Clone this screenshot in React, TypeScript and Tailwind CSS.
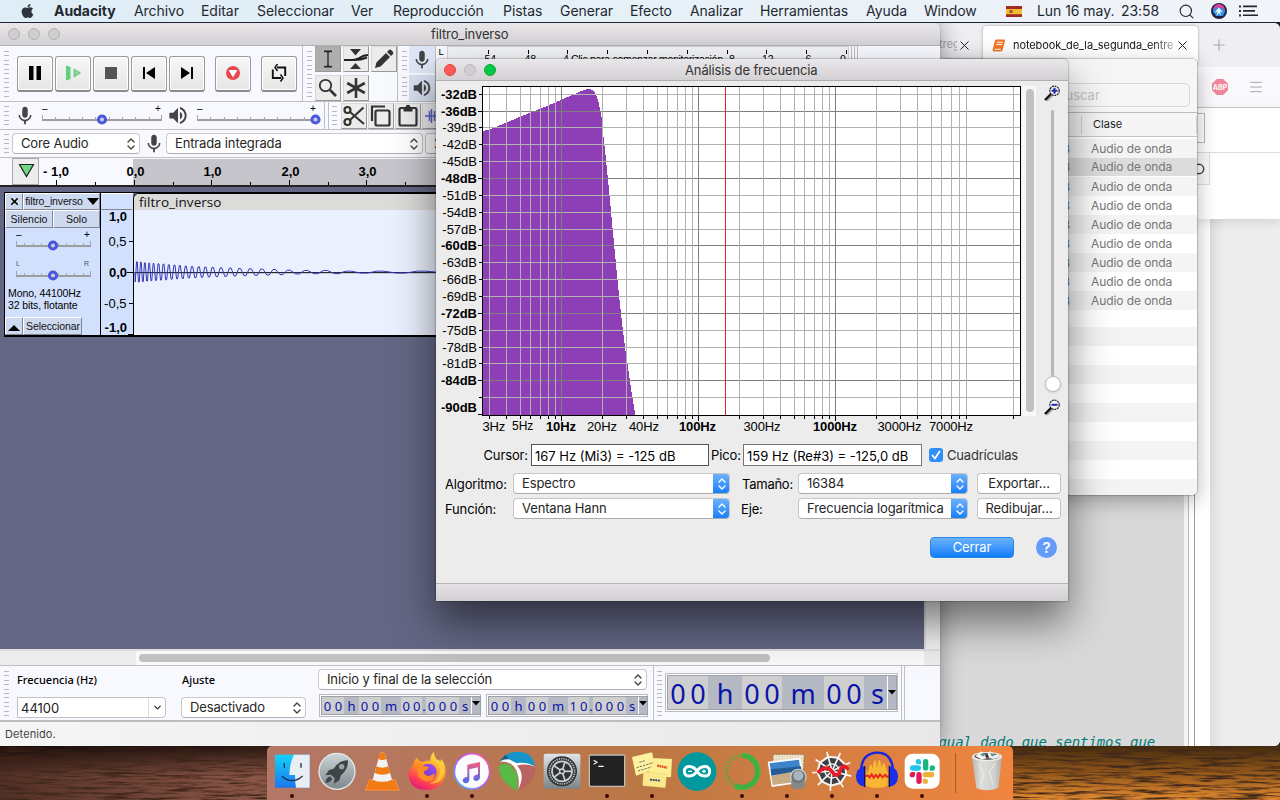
import React from "react";
import { FaApple } from "react-icons/fa";
import { MdMic, MdVolumeUp } from "react-icons/md";
import { ChevronDown, Menu, Plus, Search, X } from "lucide-react";

/* ---------- small shared pieces ---------- */

function Gripper({ n = 11 }: { n?: number }) {
  return (
    <div className="flex h-full w-[5px] shrink-0 flex-col justify-between">
      {Array.from({ length: n }, (_, i) => (
        <div key={i} className="h-px w-full bg-[#b9b9bf]" />
      ))}
    </div>
  );
}

function UpDown({ className = "" }: { className?: string }) {
  return (
    <svg viewBox="0 0 10 14" className={"h-[14px] w-[10px] " + className} fill="none" stroke="currentColor" strokeWidth="1.4" strokeLinecap="round" strokeLinejoin="round">
      <path d="M2 5 5 2l3 3M2 9l3 3 3-3" />
    </svg>
  );
}

function PlainSelect({ label, className }: { label: string; className: string }) {
  return (
    <div className={"flex h-[21px] shrink-0 items-center justify-between rounded-[4px] border border-[#c9c9cc] border-b-[#b0b0b3] bg-white pl-2 pr-[3px] text-[13px] tracking-[-0.13px] text-[#262626] " + className}>
      <span className="whitespace-nowrap">{label}</span>
      <UpDown className="text-[#444]" />
    </div>
  );
}

function BlueSelect({ label, className }: { label: string; className: string }) {
  return (
    <div className={"flex h-[21px] shrink-0 items-center justify-between overflow-hidden rounded-[4px] border border-[#c6c6c6] border-b-[#ababab] bg-white pl-2 text-[13px] tracking-[-0.13px] text-[#262626] " + className}>
      <span className="whitespace-nowrap">{label}</span>
      <div className="-mr-px flex h-[21px] w-[17px] items-center justify-center bg-gradient-to-b from-[#6cb3fa] to-[#0a7cf8] text-white">
        <UpDown />
      </div>
    </div>
  );
}

function Slider({ at, width, left = "–", right = "+" }: { at: number; width: number; left?: string; right?: string }) {
  const step = width / 9;
  const small = left === "L";
  return (
    <svg width={width + 12} height="24" className="shrink-0" fontFamily="Liberation Sans, sans-serif">
      <text x="5" y={small ? 7 : 9} fontSize={small ? 7 : 10} fill={small ? "#555" : "#000"}>{left}</text>
      <text x={width - 2} y={small ? 7 : 9} fontSize={small ? 7 : 10} fill={small ? "#555" : "#000"}>{right}</text>
      <rect x="5" y="16" width={width} height="2" fill="#9c9ca0" />
      {Array.from({ length: 10 }, (_, i) => {
        const edge = i === 0 || i === 9;
        return <rect key={i} x={Math.round(5 + i * step) - (i === 9 ? 1 : 0)} y={edge ? 12 : 14} width="1" height={edge ? 5 : 3} fill="#a5a5aa" />;
      })}
      <circle cx={at} cy="16.5" r="3.6" fill="#c8cbe4" stroke="#4a57dc" strokeWidth="3" />
    </svg>
  );
}

/* ---------- menu bar ---------- */

function MenuBar() {
  return (
    <div className="absolute left-0 top-0 flex h-[23px] w-[1280px] items-center border-b border-[#1d2630] bg-gradient-to-r from-[#dfedf7] via-[#e6f0f7] to-[#f1f4f9] text-[14px] tracking-[-0.05px] text-[#1f2830]">
      <FaApple className="ml-[20px] h-4 w-[15px] shrink-0 text-[#2c343c]" />
      <span className="ml-[19px] w-[80px] shrink-0 font-bold">Audacity</span>
      <span className="w-[67px] shrink-0">Archivo</span>
      <span className="w-[56px] shrink-0">Editar</span>
      <span className="w-[94px] shrink-0">Seleccionar</span>
      <span className="w-[42px] shrink-0">Ver</span>
      <span className="w-[110px] shrink-0 tracking-[-0.1px]">Reproducción</span>
      <span className="w-[57px] shrink-0">Pistas</span>
      <span className="w-[70px] shrink-0">Generar</span>
      <span className="w-[60px] shrink-0">Efecto</span>
      <span className="w-[70px] shrink-0">Analizar</span>
      <span className="w-[106px] shrink-0 tracking-[-0.1px]">Herramientas</span>
      <span className="w-[58px] shrink-0">Ayuda</span>
      <span className="w-[82px] shrink-0 tracking-[-0.2px]">Window</span>
      <svg className="h-[11px] w-4 shrink-0" viewBox="0 0 16 11">
        <rect width="16" height="11" fill="#a32a22" />
        <rect y="3" width="16" height="5.2" fill="#f2bd32" />
        <rect x="3.4" y="4" width="3.2" height="3" fill="#a8543a" />
      </svg>
      <span className="ml-[15px] w-[84px] shrink-0 whitespace-nowrap">Lun 16 may.</span>
      <span className="w-[57px] shrink-0">23:58</span>
      <Search className="h-[17px] w-[17px] shrink-0" strokeWidth={1.6} />
      <svg className="ml-[16px] h-4 w-4 shrink-0" viewBox="0 0 16 16">
        <circle cx="8" cy="8" r="8" fill="#1b2348" />
        <path d="M2 7a6 6 0 0 1 12 0L8 9z" fill="#d8409c" />
        <path d="M1.6 8c2-4 8-5 12.800 0L12 13H5z" fill="#2e8fe0" />
        <path d="m8 4.500 4 5-3-1 1 4.500-2-3-2.500 3 1-4.500-3 1z" fill="#e8fbff" />
      </svg>
      <svg className="ml-[12px] h-3 w-[19px] shrink-0" viewBox="0 0 19 12" fill="#1f2830">
        <path d="M0 .6h2v2H0zM4 .6h14v1.700H4zM0 5h2v2H0zM4 5h12v1.700H4zM0 9.400h2v2H0zM4 9.400h15v1.700H4z" />
      </svg>
    </div>
  );
}

/* ---------- browser window ---------- */

function Browser() {
  return (
    <div className="absolute left-[900px] top-[23px] isolate h-[723px] w-[380px] overflow-hidden rounded-b-md rounded-t-md bg-[#ededed]">
      <div className="flex h-[44px] items-center bg-[#efeff3]">
        <span className="ml-[39px] w-[18px] overflow-hidden whitespace-nowrap text-[11.5px] tracking-[-0.2px] text-[#aaa]">treg</span>
        <X className="h-[15px] w-[15px] shrink-0 text-[#222]" strokeWidth={1.6} />
        <div className="ml-[11px] flex h-[38px] w-[215px] shrink-0 items-center rounded-[4px] bg-white shadow-[0_0_3px_rgba(0,0,0,0.35)]">
          <svg className="ml-[9px] h-[13px] w-[14px] shrink-0" viewBox="0 0 14 13">
            <path d="M4.200.5H12q1.400 0 1 1.400L10.600 11q-.3 1.500-1.800 1.500H2Q.2 12.500.6 10.800L3 1.500Q3.200.5 4.200.5z" fill="#f37726" />
            <path d="M5 3.300h5.800M4.400 5.600h5.800M2.500 10.300h6.400" stroke="#fff" strokeWidth="1" />
          </svg>
          <span className="ml-[7px] w-[162px] whitespace-nowrap bg-gradient-to-r from-[#15141a] from-85% to-[#bbb] bg-clip-text text-[11px] tracking-[-0.1px] text-transparent">notebook_de_la_segunda_entre</span>
          <X className="h-[15px] w-[15px] shrink-0 text-[#222]" strokeWidth={1.6} />
        </div>
        <Plus className="ml-[12px] h-[18px] w-[18px] shrink-0 text-[#aaa]" strokeWidth={1.500} />
      </div>
      <div className="flex h-[41px] items-center border-b border-[#ccc] bg-[#f9f9fb] pl-[312px]">
        <div className="flex h-4 w-4 items-center justify-center bg-[#f0859a] text-[7px] font-bold text-white [clip-path:polygon(30%_0,70%_0,100%_30%,100%_70%,70%_100%,30%_100%,0_70%,0_30%)]">ABP</div>
        <Menu className="ml-[20px] h-4 w-4 text-[#a6a6aa]" strokeWidth={1.500} />
      </div>
      <div className="relative z-10 flex h-[111px] flex-col bg-white shadow-[0_3px_10px_rgba(0,0,0,0.12)]">
        <div className="mt-[5px] h-[30px] w-[305px] border border-[#b8b8b8]" />
        <div className="mt-[9px] border-t border-[#ddd]" />
        <div className="flex h-[32px] w-[310px] items-center justify-end border border-t-0 border-[#ddd] bg-[#fafafa] pr-[4px]">
          <svg width="12" height="12"><circle cx="6" cy="6" r="4.700" fill="none" stroke="#444" strokeWidth="1.500" /></svg>
        </div>
      </div>
      <div className="flex h-[527px]">
        <div className="flex w-[284px] flex-col justify-end bg-[#d9d9d9]">
          <div className="h-[11px] whitespace-pre pl-[38.500px] font-['DejaVu_Sans_Mono',monospace] text-[14px] italic leading-[14px] tracking-[-0.1px] text-[#007b78]">gual dado que sentimos que</div>
        </div>
        <div className="w-[5px] border-r border-[#bbb] bg-[#f4f4f4]" />
        <div className="w-[6px] border-r border-[#999] bg-white" />
        <div className="w-[15px] bg-white" />
        <div className="flex-1 bg-[#ededed] bg-gradient-to-r from-[#dedede] to-[#ededed] to-20%" />
      </div>
    </div>
  );
}

/* ---------- Finder window ---------- */

function Finder() {
  const rows = Array.from({ length: 9 }, (_, i) => i);
  return (
    <div className="absolute left-[940px] top-[59px] flex h-[436px] w-[257px] flex-col overflow-hidden rounded-[5px] bg-white shadow-[0_6px_20px_rgba(0,0,0,0.3),0_0_1px_1px_rgba(0,0,0,0.18)]">
      <div className="flex h-[54px] shrink-0 justify-end border-b border-[#bbb] bg-[#f6f6f6] pr-[7px] pt-[24px]">
        <div className="flex h-[24px] w-[160px] items-center rounded-[5px] border border-[#d9d9d9] pl-[26px] text-[13px] text-[#c3c3c3]">Buscar</div>
      </div>
      <div className="flex h-[24px] shrink-0 items-center border-b border-[#c6c6c6] bg-[#f5f5f5] text-[11px] text-[#222]">
        <div className="ml-[141px] h-[18px] border-l border-[#d0d0d0]" />
        <span className="ml-[11px]">Clase</span>
        <div className="ml-auto h-[18px] border-l border-[#d0d0d0]" />
      </div>
      <div className="mt-[2px] flex flex-col text-[12px] text-[#777]">
        {rows.map((i) => (
          <div
            key={i}
            className={
              "flex h-[19px] items-center " + (i === 1 ? "border-b border-white bg-[#dcdcdc]" : i % 2 === 0 ? "bg-[#f4f4f4]" : "bg-white")
            }
          >
            <span className="ml-[122px] w-[29px] text-[#60789a]">B</span>
            <span className="whitespace-nowrap tracking-[-0.08px]">Audio de onda</span>
          </div>
        ))}
        <div className="h-[17px]" />
        {rows.map((i) => (
          <div key={i} className={"h-[19px] " + (i % 2 === 0 ? "bg-[#f4f4f4]" : "bg-white")} />
        ))}
      </div>
    </div>
  );
}

/* ---------- Audacity toolbars ---------- */

function TransportButton({ children, className = "" }: { children: React.ReactNode; className?: string }) {
  return (
    <div className={"flex h-[36px] w-[36px] shrink-0 items-center justify-center rounded-[3px] border border-[#9b9b9b] border-b-2 border-b-[#8b8b8b] bg-gradient-to-b from-[#f7f7f7] to-[#e6e6e6] shadow-[inset_0_0_0_1px_#fff] " + className}>
      {children}
    </div>
  );
}

function ToolCell({ children, on = false }: { children?: React.ReactNode; on?: boolean }) {
  return (
    <div className={"flex h-[26px] w-[26px] shrink-0 items-center justify-center border border-r-[#999] border-b-[#999] " + (on ? "border-[#aaa] bg-[#aeaeae]" : "border-[#d8d8d8] bg-[#ececec]")}>
      {children}
    </div>
  );
}

function Toolbars() {
  return (
    <div className="flex flex-col bg-[#f8f9ff]">
      <div className="flex h-[56px] border-b border-[#c0c0c4]">
        <div className="flex w-[303px] shrink-0 items-center border-r border-[#c0c0c4] pl-1">
          <div className="h-[46px]"><Gripper /></div>
          <TransportButton className="ml-2">
            <svg width="14" height="14"><path d="M1 0h4.500v14H1zM8.500 0H13v14H8.500z" /></svg>
          </TransportButton>
          <TransportButton className="ml-[2px]">
            <svg width="18" height="16"><path d="M2 .5 6.500 2v12L2 15.500z" fill="#5fd07c" /><path d="m10 4 6.500 4L10 12z" fill="#8bd59a" stroke="#5fb878" strokeWidth=".8" /></svg>
          </TransportButton>
          <TransportButton className="ml-[2px]"><div className="h-[12px] w-[12px] bg-[#555]" /></TransportButton>
          <TransportButton className="ml-[2px]">
            <svg width="14" height="14"><path d="M1 1h2v12H1zM13 1v12L4 7z" /></svg>
          </TransportButton>
          <TransportButton className="ml-[2px]">
            <svg width="14" height="14"><path d="M11 1h2v12h-2zM1 1v12l9-6z" /></svg>
          </TransportButton>
          <TransportButton className="ml-[10px]">
            <svg width="16" height="16"><circle cx="8" cy="8" r="7" fill="#e8474d" /><path d="M3.600 5h8.800L8 12.500z" fill="#fff" /></svg>
          </TransportButton>
          <TransportButton className="ml-[10px]">
            <svg width="18" height="18" fill="none" stroke="#111" strokeWidth="1.900"><path d="M2.800 5.500V14H11M15.200 12V3.500H7" /><path d="M10.500 10.500 13 14l-2.500 3.500M7.500 0 5 3.500 7.500 7" strokeWidth="1.500" /></svg>
          </TransportButton>
        </div>
        <div className="flex w-[95px] shrink-0 border-r border-[#c0c0c4] pl-1">
          <div className="my-[5px] h-[46px]"><Gripper /></div>
          <div className="ml-[3px] grid w-[82px] grid-cols-3 gap-x-[2px] gap-y-[2px]">
            <ToolCell on><svg width="10" height="18" fill="none" stroke="#222" strokeWidth="1.300"><path d="M1 1.500q4-.5 4 2v11q0 2.500-4 2M9 1.500q-4-.5-4 2v11q0 2.500 4 2M1 1.200h8M1 16.800h8" /></svg></ToolCell>
            <ToolCell><svg width="24" height="22" className="shrink-0"><path d="M6 1h11l-5.500 6.500zM6 21h11l-5.500-6z" fill="#333" /><path d="M0 12h8q6-.5 9-3 2-1.500 7-2M0 12h8q8 .5 15-2.500" fill="none" stroke="#222" strokeWidth="2" /></svg></ToolCell>
            <ToolCell><svg width="20" height="20" fill="#333"><path d="m1 19 1.400-5.500L12 4l4 4-9.500 9.600zM13 3l2-2q1.200-1 2.500.3L18.700 2.500q1.200 1.300.3 2.500l-2 2z" /></svg></ToolCell>
            <ToolCell><svg width="20" height="20" fill="none" stroke="#333"><circle cx="7.500" cy="7.500" r="5.700" strokeWidth="1.800" /><path d="m12 12 6 6" strokeWidth="2.600" /></svg></ToolCell>
            <ToolCell><svg width="20" height="20" stroke="#333" strokeWidth="2.600"><path d="M10 0v20M1.200 5l17.600 10M1.200 15 18.800 5" /></svg></ToolCell>
          </div>
        </div>
        <div className="flex w-[38px] shrink-0 border-r border-[#c0c0c4] pl-1">
          <div className="flex flex-col justify-between py-[5px]">
            <div className="h-[19px]"><Gripper n={5} /></div>
            <div className="h-[19px]"><Gripper n={5} /></div>
          </div>
          <div className="ml-[2px] flex w-[27px] flex-col gap-[2px] text-[#444]">
            <div className="flex h-[27px] items-center justify-center bg-[#dfe7f6]"><MdMic className="h-[22px] w-[22px]" /></div>
            <div className="flex h-[26px] items-center justify-center bg-[#d8e0f0]"><MdVolumeUp className="h-[22px] w-[22px]" /></div>
          </div>
        </div>
        <svg width="504" height="55" viewBox="436 46 504 55" fontFamily="Liberation Sans, sans-serif" fontSize="10.500">
          <text x="438.500" y="55" fontSize="9.500">L</text>
          <rect x="447.500" y="46.500" width="401" height="55" fill="#f1f2f5" stroke="#d2d2d6" />
          {[488, 528, 567, 607, 647, 687, 727, 766, 806, 846].map((x) => (
            <rect key={x} x={x} y="50" width="1" height="4" />
          ))}
          <text x="481" y="62.500">-54</text><text x="521" y="62.500">-48</text><text x="559.500" y="62.500">-4</text>
          <text x="571" y="62.500" textLength="152">Clic para comenzar monitorización</text>
          <text x="729" y="62.500">8</text><text x="758.500" y="62.500">-12</text><text x="802" y="62.500">-6</text><text x="840" y="62.500">0</text>
          <path d="M851.500 46v55M854.500 46v55M857.500 46v55" stroke="#c0c0c4" />
        </svg>
      </div>
      <div className="flex h-[28px] border-b border-[#c0c0c4]">
        <div className="flex w-[325px] shrink-0 items-center border-r border-[#c0c0c4] pl-1">
          <div className="h-[19px]"><Gripper n={5} /></div>
          <MdMic className="ml-[5px] h-[22px] w-[22px] shrink-0 text-[#444]" />
          <div className="ml-px -mt-[2px]"><Slider at={65} width={120} /></div>
          <MdVolumeUp className="-ml-[3px] h-[23px] w-[24px] shrink-0 text-[#444]" />
          <div className="ml-[2px] -mt-[2px]"><Slider at={123.500} width={120} /></div>
        </div>
        <div className="ml-[3px] flex items-center border-l border-[#c0c0c4] pl-[3px]">
          <div className="h-[19px]"><Gripper n={5} /></div>
          <div className="ml-[4px] flex gap-[1px]">
            <ToolCell><svg width="22" height="22" fill="none" stroke="#333" strokeWidth="2.200"><circle cx="4.500" cy="5" r="3" /><circle cx="4.500" cy="17" r="3" /><path d="M7 7 21 19M7 15 20.500 2.500" /></svg></ToolCell>
            <ToolCell><svg width="22" height="23" fill="none" stroke="#333" strokeWidth="2.200"><path d="M2 17V2.500h13" /><rect x="5.500" y="6.500" width="14" height="15" rx="1.500" /></svg></ToolCell>
            <ToolCell><svg width="20" height="23" fill="none" stroke="#333" strokeWidth="2.200"><rect x="1.500" y="4" width="17" height="17.500" rx="1.500" /><path d="M5.500 3h9v4.500h-9z" fill="#333" stroke="none" /><circle cx="10" cy="3" r="2.300" fill="#333" stroke="none" /></svg></ToolCell>
            <ToolCell><svg width="24" height="18" stroke="#5864c8" className="shrink-0"><path d="M2 9h20M6.500 4v10M8.500 2v14M11.500 4v10" strokeWidth="1.500" /></svg></ToolCell>
          </div>
        </div>
      </div>
      <div className="flex h-[28px] items-center border-b border-[#c0c0c4] pl-1">
        <div className="h-[19px]"><Gripper n={5} /></div>
        <PlainSelect label="Core Audio" className="ml-[3px] w-[128px]" />
        <MdMic className="ml-[3px] h-[22px] w-[22px] shrink-0 text-[#444]" />
        <PlainSelect label="Entrada integrada" className="ml-[1px] w-[257px]" />
        <PlainSelect label="2" className="ml-[2px] w-[160px]" />
      </div>
      <div className="flex h-[29px] border-b-2 border-[#222]">
        <svg width="133" height="27" fontFamily="Liberation Sans, sans-serif" fontSize="13" fontWeight="bold" className="shrink-0">
          <rect x="12.500" y=".5" width="26" height="26" fill="#ededed" stroke="#a8a8a8" />
          <path d="M19.500 6.500h14l-7 12z" fill="#6fd684" stroke="#222" strokeWidth="1.200" />
          <text x="43" y="17.500">- 1,0</text>
          <path d="M56.500 22v5M95.500 24v3" stroke="#000" />
        </svg>
        <svg width="807" height="27" viewBox="133 158 807 27" fontFamily="Liberation Sans, sans-serif" fontSize="13" fontWeight="bold" textAnchor="middle" className="overflow-visible">
          <rect x="133" y="159" width="807" height="26" fill="#c5c5cb" />
          <text x="135.500" y="175.500">0,0</text><text x="212.500" y="175.500">1,0</text><text x="290.500" y="175.500">2,0</text><text x="367.500" y="175.500">3,0</text>
          <path d="M134.500 180v5M211.500 180v5M289.500 180v5M366.500 180v5M173.500 182v3M250.500 182v3M328.500 182v3M405.500 182v3" stroke="#000" />
        </svg>
      </div>
    </div>
  );
}

/* ---------- track ---------- */

const PEAKS: [number, number][] = [
  [409, 31], [421, 30], [433, 28], [446, 27], [459, 26], [474, 25], [489, 24], [505, 22], [522, 21], [538, 20], [556, 18], [575, 17],
  [595, 16], [615, 15], [637, 14], [662, 13], [690, 12], [718, 11], [750, 10], [785, 9], [822, 8], [866, 6], [918, 5], [976, 5],
  [1045, 3], [1140, 3], [1265, 3],
];

function wavePath() {
  let d = "M403 277 L404 306";
  PEAKS.forEach(([x, a], i) => {
    const next = PEAKS[i + 1];
    const prev = i ? PEAKS[i - 1][0] : 397;
    const half = (x - prev) / 4;
    d += ` L${x - half} 277 L${x - half * 0.4} ${277 - a} L${x + half * 0.4} ${277 - a}`;
    if (next) {
      const m = (x + next[0]) / 2;
      const q = (next[0] - x) / 4;
      const b = a * (a > 8 ? 0.95 : 0.9);
      d += ` L${x + q} 277 L${m - q * 0.4} ${277 + b} L${m + q * 0.4} ${277 + b}`;
    }
  });
  return d + " L1310 277";
}

const CHIP = "flex shrink-0 items-center justify-center whitespace-nowrap border-r border-b border-[#7f8798] border-t border-t-white border-l border-l-white bg-[#cdd9ef] text-[#111]";

function Track() {
  return (
    <div className="ml-[4px] mt-[5px] flex h-[145px] border-2 border-r-0 border-black font-['Liberation_Sans',sans-serif] [border-left-width:1px] [border-top-width:1px]">
      <div className="flex w-[96px] shrink-0 flex-col border-r border-black bg-[#d1e0fd] text-[10.5px]">
        <div className="flex h-[17px]">
          <div className={CHIP + " w-[18px]"}><X className="h-[11px] w-[11px] text-black" strokeWidth={3.500} /></div>
          <div className={CHIP + " w-[77px] gap-[4px] pl-px tracking-[-0.15px]"}>
            filtro_inverso
            <svg width="12" height="7" className="shrink-0"><path d="M0 0h12L6 7z" /></svg>
          </div>
        </div>
        <div className="flex h-[18px]">
          <div className={CHIP + " w-[48px]"}>Silencio</div>
          <div className={CHIP + " w-[47px]"}>Solo</div>
        </div>
        <div className="ml-[6px] mt-px h-[26px]"><Slider at={42} width={75} /></div>
        <div className="ml-[6px] mt-[4px] h-[26px]"><Slider at={42} width={75} left="L" right="R" /></div>
        <div className="mt-[2px] whitespace-nowrap pl-[3px] leading-[12px] tracking-[-0.1px] text-black">
          Mono, 44100Hz
          <br />
          32 bits, flotante
        </div>
        <div className="mt-auto flex h-[18px]">
          <div className={CHIP + " w-[18px]"}><svg width="12" height="6" className="mt-[3px]"><path d="M0 6h12L6 0z" /></svg></div>
          <div className={CHIP + " w-[59px] pl-px tracking-[-0.1px]"}>Seleccionar</div>
        </div>
      </div>
      <svg width="32" height="142" viewBox="101 193 32 142" className="shrink-0" fontSize="13" textAnchor="end">
        <rect x="101" y="193" width="32" height="142" fill="#d1e0fd" />
        <path d="M101 209.500h31" stroke="#888" />
        <path d="M101 193.500h32" stroke="#fff" />
        <text x="127" y="221" fontWeight="bold">1,0</text>
        <text x="126.500" y="246">0,5</text>
        <text x="127" y="277" fontWeight="bold">0,0</text>
        <text x="126.500" y="308">-0,5</text>
        <text x="127" y="332" fontWeight="bold">-1,0</text>
        <path d="M129 241.500h4M127 272.500h6M129 303.500h4M128 334.500h5" stroke="#000" />
      </svg>
      <div className="flex min-w-0 flex-1 flex-col overflow-hidden rounded-tl-[6px] border-l border-t border-black bg-[#eaf0fe]">
        <div className="h-[16px] shrink-0 bg-[#dbdbda] pl-[5px] font-['Open_Sans',sans-serif] text-[13.500px] leading-[16px] tracking-[0.05px] text-[#111]">filtro_inverso</div>
        <svg width="303" height="124" viewBox="402 90 908 373" className="shrink-0" fill="none">
          <path d="M402 278.500h908" stroke="#000" strokeWidth="3" />
          <path d={wavePath()} stroke="#3237b8" strokeWidth="3" strokeLinejoin="round" />
        </svg>
      </div>
    </div>
  );
}

/* ---------- selection bar ---------- */

type Seg = [string, string, boolean];

function TimeBox({ segs, big = false }: { segs: Seg[]; big?: boolean }) {
  return (
    <div className={"flex shrink-0 border border-[#bcbcc0] bg-white p-px font-['Noto_Sans',sans-serif] text-[#0a14a8] " + (big ? "h-[39px] text-[27px]" : "h-[23px] text-[13px]")}>
      <div className="flex flex-1 border border-[#9da0a8] bg-[#b4b9c3]">
        {segs.map(([t, w, digit], i) => (
          <div key={i} className={"flex shrink-0 items-center justify-around pt-px leading-none " + w + (digit ? " bg-[#cfcfcf]" : "")}>
            {t.split("").map((c, j) => (
              <span key={j}>{c}</span>
            ))}
          </div>
        ))}
        <div className="flex flex-1 items-center justify-center border-l border-white">
          <svg width="8" height="5" className={big ? "" : "-mt-[4px]"}><path d="M0 0h8L4 4.500z" fill="#000" /></svg>
        </div>
      </div>
    </div>
  );
}

const small = (a: string): Seg[] => [
  ["00", "w-[22px]", true], ["h", "w-[15px]", false], ["00", "w-[22px]", true], ["m", "w-[20px]", false],
  [a, "w-[21px]", true], [".", "w-[4px]", false], ["000", "w-[33px]", true], ["s", "w-[12px]", false],
];

function SelectionBar() {
  return (
    <div className="flex h-[57px] border-b-2 border-t border-b-[#bdbdbf] border-t-[#c0c0c4] bg-[#f8f9ff]">
      <div className="flex w-[654px] shrink-0 border-r border-[#c0c0c4] pl-1">
        <div className="my-[5px] h-[45px]"><Gripper /></div>
        <div className="ml-2 flex w-[164px] flex-col">
          <span className="mt-[6px] h-[16px] font-['Noto_Sans',sans-serif] text-[11px] font-medium leading-[16px] text-black">Frecuencia (Hz)</span>
          <div className="mt-[9px] flex h-[21px] w-[149px] items-center rounded-r-[4px] border border-[#c2c2c4] bg-white pl-[3px] text-[13px] text-[#222]">
            <span className="flex-1 pt-px">44100</span>
            <div className="flex h-full w-[17px] items-center justify-center border-l border-[#ddd]"><ChevronDown className="h-[11px] w-[11px]" strokeWidth={2.500} /></div>
          </div>
        </div>
        <div className="flex w-[137px] flex-col">
          <span className="mt-[6px] h-[16px] pl-px font-['Noto_Sans',sans-serif] text-[11px] font-medium leading-[16px] text-black">Ajuste</span>
          <PlainSelect label="Desactivado" className="mt-[9px] w-[125px]" />
        </div>
        <div className="flex flex-col">
          <PlainSelect label="Inicio y final de la selección" className="mt-[3px] w-[329px]" />
          <div className="mt-[4px] flex gap-[4px]">
            <div className="flex w-[163px] flex-col pl-px"><TimeBox segs={small("00")} /></div>
            <div className="flex w-[163px] flex-col pl-px"><TimeBox segs={small("10")} /></div>
          </div>
        </div>
      </div>
      <div className="flex w-[248px] shrink-0 border-r border-[#c0c0c4] pl-[3px]">
        <div className="my-[5px] h-[45px]"><Gripper /></div>
        <div className="ml-[3px] mt-[7px] flex w-[233px] flex-col">
          <TimeBox
            big
            segs={[
              ["00", "w-[40px]", true], ["h", "w-[34px]", false], ["00", "w-[40px]", true],
              ["m", "w-[42px]", false], ["00", "w-[40px]", true], ["s", "w-[23px] pl-[4px]", false],
            ]}
          />
        </div>
      </div>
      <div className="ml-[2px] flex-1 border-l border-[#c0c0c4]" />
    </div>
  );
}

function Audacity() {
  return (
    <div className="absolute left-0 top-[23px] flex h-[723px] w-[940px] flex-col overflow-hidden rounded-tr-[5px] bg-[#ececec] shadow-[0_0_22px_rgba(0,0,0,0.4),0_0_1px_rgba(0,0,0,0.6)]">
      <div className="flex h-[23px] shrink-0 items-center border-b border-[#b3b1b3] bg-gradient-to-b from-[#e9e7e9] to-[#d3d1d3] pl-[8px]">
        {[0, 1, 2].map((i) => (
          <div key={i} className="mr-[8px] h-3 w-3 rounded-full border border-[#b3b1b3] bg-[#cfcdcf]" />
        ))}
        <span className="ml-[363px] text-[13px] tracking-[-0.12px] text-[#333]">filtro_inverso</span>
      </div>
      <Toolbars />
      <div className="flex h-[462px] shrink-0">
        <div className="w-[924px] bg-[#636784]"><Track /></div>
        <div className="flex-1 border-l-2 border-[#dcdcdc] bg-[#f2f2f2]" />
      </div>
      <div className="flex h-[16px] shrink-0 border-t-2 border-[#dedede]">
        <div className="ml-[136px] flex w-[788px] items-center bg-[#f9f9f9] pl-[3px]">
          <div className="h-[8px] w-[631px] rounded-full bg-[#c1c1c1]" />
        </div>
      </div>
      <SelectionBar />
      <div className="flex flex-1 items-center bg-gradient-to-r from-[#f5f5f5] to-[#e8e8e8] pl-[5px] text-[11px] tracking-[0.1px] text-[#444]">Detenido.</div>
    </div>
  );
}

/* ---------- frequency dialog ---------- */

const H_LINES = [94, 111, 127, 144, 161, 178, 195, 212, 229, 245, 262, 279, 296, 313, 330, 347, 363, 380, 397];
const H_LABELS = [32, 36, 39, 42, 45, 48, 51, 54, 57, 60, 63, 66, 69, 72, 75, 78, 81, 84];
const MAJOR_H = [36, 48, 60, 72, 84];
const BOLD_H = [32, 36, 48, 60, 72, 84];

const V_FREQS = [
  3, 4, 5, 6, 7, 8, 9, 10, 20, 30, 40, 50, 60, 70, 80, 90, 100, 200, 300, 400, 500, 600, 700, 800, 900, 1000, 2000, 3000, 4000, 5000,
  6000, 7000, 8000, 9000, 20000,
];
const freqX = (f: number) => Math.floor(561.3 + 137 * (Math.log10(f) - 1));

const X_LABELS: [number, string, boolean][] = [
  [482.500, "3Hz", false], [546, "10Hz", true], [587, "20Hz", false], [629, "40Hz", false], [679, "100Hz", true],
  [743.500, "300Hz", false], [813, "1000Hz", true], [877.500, "3000Hz", false], [929, "7000Hz", false],
];

const SLOPE: [number, number][] = [
  [141, 213], [160, 208], [205, 190], [250, 171], [290, 155], [330, 139], [376, 119], [410, 104], [436, 93], [450, 88], [462, 87], [470, 91],
  [478, 101], [485, 118], [490, 140], [496, 172], [499, 200], [502, 230], [508, 285], [516, 365], [524, 450], [533, 545], [542, 640],
  [551, 730], [560, 810], [568, 872], [576, 925], [586, 995], [597, 1062],
];

function spectrumPath() {
  let d = "M483 415";
  for (let x = 483; x <= 634; x++) {
    const cx = (x - 436) * 3 + 1;
    let i = 0;
    while (i < SLOPE.length - 2 && SLOPE[i + 1][0] < cx) i++;
    const [x0, y0] = SLOPE[i];
    const [x1, y1] = SLOPE[i + 1];
    const y = Math.round(60 + (y0 + ((y1 - y0) * (cx - x0)) / (x1 - x0)) / 3);
    d += `V${Math.min(y, 415)}H${x + 1}`;
  }
  return d + "V415Z";
}

function Chart() {
  return (
    <svg width="586" height="356" viewBox="436 81 586 356" className="shrink-0" fontFamily="Liberation Sans, sans-serif" fontSize="13">
      <rect x="482" y="86" width="539" height="330" fill="#fff" />
      <path d={spectrumPath()} fill="#8f3fb5" shapeRendering="crispEdges" />
      {H_LINES.map((y, i) => (
        <g key={y}>
          <rect x="483" y={y} width="537" height="1" fill={MAJOR_H.includes(H_LABELS[i]) ? "#7f7f7f" : "#b2b2b2"} />
          <rect x={MAJOR_H.includes(H_LABELS[i]) ? 478 : 479} y={y} width="4" height="1" />
        </g>
      ))}
      {V_FREQS.map((f) => {
        const major = f === 10 || f === 100 || f === 1000;
        return (
          <g key={f}>
            <rect x={freqX(f)} y="87" width="1" height="328" fill={major ? "#7f7f7f" : "#b2b2b2"} />
            <rect x={freqX(f)} y="416" width="1" height={major ? 5 : 3} />
          </g>
        );
      })}
      <rect x="725" y="87" width="1" height="328" fill="#e0202c" />
      <rect x="482.500" y="86.500" width="538" height="329" fill="none" stroke="#000" />
      <rect x="478" y="414" width="4" height="1" />
      {H_LABELS.map((v, i) => (
        <text key={v} x="477" y={H_LINES[i] + 4.500} textAnchor="end" fontWeight={BOLD_H.includes(v) ? "bold" : "normal"}>{`-${v}dB`}</text>
      ))}
      <text x="477" y="412" textAnchor="end" fontWeight="bold">-90dB</text>
      {X_LABELS.map(([x, t, b]) => (
        <text key={t} x={x} y="431" fontWeight={b ? "bold" : "normal"} letterSpacing="-0.15">{t}</text>
      ))}
      <text x="512" y="430" fontSize="12">5Hz</text>
    </svg>
  );
}

function ZoomGlyph({ plus = false }: { plus?: boolean }) {
  return (
    <svg width="17" height="17" viewBox="0 0 17 17">
      <path d="m2.500 15.500 6-6" stroke="#aaa" strokeWidth="3" />
      <path d="m1 15 6.500-6.500" stroke="#111" strokeWidth="2.400" />
      <circle cx="10.500" cy="5.800" r="4.700" fill="#f4f4ff" stroke="#222" strokeWidth="1.200" strokeDasharray="2 .7" />
      <path d={plus ? "M7.500 5.800h6M10.500 2.800v6" : "M7.500 5.800h6"} stroke="#1c2aa8" strokeWidth="2" />
    </svg>
  );
}

function PushButton({ label }: { label: string }) {
  return (
    <div className="flex h-[21px] w-[84px] shrink-0 items-center justify-center rounded-[4px] border border-[#c6c6c6] border-b-[#ababab] bg-white text-[13px] tracking-[-0.1px] text-[#262626]">{label}</div>
  );
}

function Dialog() {
  return (
    <div className="absolute left-[436px] top-[59px] flex h-[542px] w-[632px] flex-col rounded-t-[5px] bg-[#ececec] text-[13px] shadow-[0_22px_42px_rgba(0,0,0,0.5),0_0_2px_rgba(0,0,0,0.6)]">
      <div className="flex h-[22px] shrink-0 items-center rounded-t-[5px] border-b border-[#b1afb1] bg-gradient-to-b from-[#e9e7e9] to-[#d3d1d3] pl-[8px]">
        <div className="h-3 w-3 rounded-full border border-[#e0443e] bg-[#fc5b57]" />
        <div className="ml-2 h-3 w-3 rounded-full border border-[#bcbabc] bg-[#d0ced0]" />
        <div className="ml-2 h-3 w-3 rounded-full border border-[#12ac28] bg-[#05c74e]" />
        <span className="ml-[189px] pt-px tracking-[-0.13px] text-[#333]">Análisis de frecuencia</span>
      </div>
      <div className="flex h-[356px] shrink-0">
        <Chart />
        <div className="mt-[5px] flex h-[330px] w-[14px] justify-center bg-[#f8f8f8] pl-[2px] pt-[3px]">
          <div className="h-[323px] w-[8px] rounded-full bg-[#c1c1c1]" />
        </div>
        <div className="ml-[7px] flex w-[19px] flex-col items-center pt-[4px]">
          <ZoomGlyph plus />
          <div className="mt-[8px] h-[266px] w-[3px] shrink-0 rounded-full bg-[#b6b6b6]" />
          <div className="h-[16px] w-[16px] shrink-0 rounded-full border border-[#bbb] bg-white shadow-sm" />
          <div className="mt-[7px]"><ZoomGlyph /></div>
        </div>
      </div>
      <div className="mt-[7px] flex h-[22px] items-center">
        <span className="w-[95px] pr-[3px] text-right tracking-[-0.12px] text-black">Cursor:</span>
        <div className="flex h-[22px] w-[178px] items-center whitespace-nowrap border border-[#555] bg-white pl-[3px] pt-[3px] text-black">167 Hz (Mi3) = -125 dB</div>
        <span className="w-[34px] pl-[2px] tracking-[-0.1px] text-black">Pico:</span>
        <div className="flex h-[22px] w-[179px] items-center whitespace-nowrap border border-[#777] bg-white pl-[3px] pt-[3px] text-black">159 Hz (Re#3) = -125,0 dB</div>
        <div className="ml-[7px] flex h-[14px] w-[14px] items-center justify-center rounded-[3px] bg-[#2f8ff7]">
          <svg width="10" height="10" fill="none" stroke="#fff" strokeWidth="1.800" strokeLinecap="round" strokeLinejoin="round"><path d="m1.500 5.500 2.500 3 4.500-7" /></svg>
        </div>
        <span className="ml-[4px] tracking-[-0.2px] text-[#333]">Cuadrículas</span>
      </div>
      <div className="mt-[7px] flex h-[21px] items-center tracking-[-0.15px]">
        <span className="mt-[2px] w-[77px] pl-[9px] text-black">Algoritmo:</span>
        <BlueSelect label="Espectro" className="w-[217px]" />
        <span className="mt-[2px] w-[68px] pl-[12px] tracking-[-0.25px] text-black">Tamaño:</span>
        <BlueSelect label="16384" className="w-[170px]" />
        <div className="ml-[9px]"><PushButton label="Exportar..." /></div>
      </div>
      <div className="mt-[4px] flex h-[21px] items-center tracking-[-0.15px]">
        <span className="mt-[2px] w-[77px] pl-[9px] text-black">Función:</span>
        <BlueSelect label="Ventana Hann" className="w-[217px]" />
        <span className="mt-[2px] w-[68px] pl-[11px] text-black">Eje:</span>
        <BlueSelect label="Frecuencia logarítmica" className="w-[170px]" />
        <div className="ml-[9px]"><PushButton label="Redibujar..." /></div>
      </div>
      <div className="mt-[17px] flex h-[22px] items-center pl-[494px]">
        <div className="flex h-[21px] w-[84px] items-center justify-center rounded-[4px] border border-[#2a87ee] bg-gradient-to-b from-[#69b2fa] to-[#087bfb] tracking-[-0.1px] text-white">Cerrar</div>
        <div className="ml-[22px] flex h-[21px] w-[21px] items-center justify-center rounded-full bg-[#649bfa] text-[15px] font-semibold text-white">?</div>
      </div>
      <div className="mt-auto h-[18px] border-t border-[#b7b5b7] bg-gradient-to-b from-[#e4e2e4] to-[#d1cfd1]" />
    </div>
  );
}

/* ---------- dock icons, each on a 120 x 120 grid ---------- */

const polar = (cx: number, cy: number, r: number, deg: number): [number, number] => [
  cx + r * Math.cos((deg * Math.PI) / 180),
  cy + r * Math.sin((deg * Math.PI) / 180),
];

const DOCK: { dot: boolean; art: React.ReactNode }[] = [
  {
    dot: true,
    art: (
      <g>
        <defs><linearGradient id="fb" x1="0" y1="0" x2="0" y2="1"><stop offset="0" stopColor="#12d3fb" /><stop offset="1" stopColor="#1a76ee" /></linearGradient></defs>
        <rect x="9" y="11" width="104" height="99" fill="url(#fb)" />
        <path d="M66 11h47v99H72q-3-15-3-38H52Q53 35 66 11z" fill="#e9eef5" />
        <path d="M37 37v12M87 37v12" stroke="#18314d" strokeWidth="4" strokeLinecap="round" />
        <path d="M29 75q31 28 63 0" fill="none" stroke="#18314d" strokeWidth="3.500" />
      </g>
    ),
  },
  {
    dot: false,
    art: (
      <g>
        <defs><linearGradient id="lp" x1="0" y1="0" x2="0" y2="1"><stop offset="0" stopColor="#cdd6d9" /><stop offset="1" stopColor="#7d888c" /></linearGradient></defs>
        <circle cx="60" cy="61" r="54" fill="url(#lp)" stroke="#e4e8ea" strokeWidth="4" />
        <path d="M93 28Q66 28 50 53L36 57 25 73l17-2 11 11-3 16 16-9 6-16Q94 55 93 28z" fill="#3f4447" />
        <path d="M39 76q-12 4-14 20 16-1 21-12z" fill="#3f4447" />
        <circle cx="74" cy="47" r="8" fill="#9aa4a8" />
      </g>
    ),
  },
  {
    dot: false,
    art: (
      <g>
        <path d="M22 86h78l12 32H10z" fill="#f27a14" stroke="#ffa047" strokeWidth="2" />
        <path d="M54 6q7-5 14 0l24 88q-31 16-62 0z" fill="#f2f2f2" />
        <path d="M54 6q7-5 14 0l5 18q-12 6-24 0zM43 46q18 8 36 0l6 20q-24 10-47 0zM32 86q29 13 58 0l3 9q-32 17-64 0z" fill="#f17c15" />
      </g>
    ),
  },
  {
    dot: true,
    art: (
      <g>
        <defs>
          <linearGradient id="ff" x1=".8" y1="0" x2=".3" y2="1"><stop offset="0" stopColor="#ffe84a" /><stop offset=".45" stopColor="#ff9a24" /><stop offset=".8" stopColor="#ff3d55" /><stop offset="1" stopColor="#e3197d" /></linearGradient>
          <linearGradient id="fg" x1="0" y1="1" x2="1" y2="0"><stop offset="0" stopColor="#5d35c4" /><stop offset="1" stopColor="#a651ef" /></linearGradient>
        </defs>
        <path d="M80 2q-12 14-10 27-13-2-22 4-14-2-17-13-12 8-12 22Q2 60 5 75q6 43 56 42 52-4 55-55 0-26-14-38l-2 10Q82 22 80 2z" fill="url(#ff)" />
        <circle cx="64" cy="63" r="25" fill="url(#fg)" />
        <path d="M18 41q21-8 32 4l15 3q-1 8-14 13-1 11 12 14 12 0 19-8 3 22-18 24Q27 88 32 53z" fill="#ff8b25" />
        <path d="M70 29q33 5 27 39-6 23-30 29 41 4 44-37-2-24-15-34z" fill="#ffce3c" opacity=".8" />
      </g>
    ),
  },
  {
    dot: true,
    art: (
      <g>
        <defs>
          <linearGradient id="it" x1="1" y1="0" x2="0" y2="1"><stop offset="0" stopColor="#fb5c8a" /><stop offset=".5" stopColor="#b45af2" /><stop offset="1" stopColor="#2ec3fa" /></linearGradient>
          <linearGradient id="in" x1="0" y1="0" x2="0" y2="1"><stop offset="0" stopColor="#fa5b7c" /><stop offset="1" stopColor="#4b6df5" /></linearGradient>
        </defs>
        <circle cx="60" cy="61" r="53" fill="#fbfbfd" stroke="url(#it)" strokeWidth="5" />
        <path d="M46 41 84 33v45q0 11-11 12-9-1-9-9 1-9 14-11V49l-26 6v30q0 11-11 12-9-1-9-9 1-9 14-11z" fill="url(#in)" />
      </g>
    ),
  },
  {
    dot: false,
    art: (
      <g>
        <path d="M9 30Q30 0 64 2q44 2 50 44-24-10-50 2L34 36z" fill="#1693c9" />
        <path d="M5 46q2 48 56 74L60 70 40 42Q14 36 5 46z" fill="#58b947" />
        <path d="M58 44q28-12 58 2 1 44-51 74Q78 76 58 44z" fill="#b86460" />
        <path d="M8 32q28-2 42 14 20 24 14 68 22-44-4-70 28-8 56 4-22-16-58-12L26 20q-12 4-18 12z" fill="#fff" />
        <path d="m8 31 18-20 10 14q-14-2-28 6z" fill="#175e80" />
      </g>
    ),
  },
  {
    dot: false,
    art: (
      <g>
        <defs><linearGradient id="sp" x1="0" y1="0" x2="0" y2="1"><stop offset="0" stopColor="#dfe6e9" /><stop offset="1" stopColor="#7c8488" /></linearGradient></defs>
        <rect x="5" y="8" width="110" height="105" rx="6" fill="url(#sp)" />
        <circle cx="60" cy="61" r="45" fill="#2f3335" />
        <circle cx="60" cy="61" r="38" fill="none" stroke="#b7bec1" strokeWidth="5" strokeDasharray="4 3" />
        <circle cx="60" cy="61" r="30" fill="none" stroke="#cdd2d4" strokeWidth="5" />
        {[0, 72, 144, 216, 288].map((a) => {
          const [x, y] = polar(60, 61, 30, a);
          return <path key={a} d={`M60 61L${x} ${y}`} stroke="#cdd2d4" strokeWidth="5" />;
        })}
        <circle cx="60" cy="61" r="7" fill="#34383a" stroke="#cdd2d4" strokeWidth="4" />
      </g>
    ),
  },
  {
    dot: true,
    art: (
      <g>
        <rect x="5" y="10" width="110" height="98" rx="5" fill="#bcbcb8" />
        <rect x="9" y="14" width="102" height="90" rx="2" fill="#222" />
        <path d="m20 28 10 6-10 6M34 46h16" fill="none" stroke="#fff" strokeWidth="3.500" />
      </g>
    ),
  },
  {
    dot: true,
    art: (
      <g>
        <path d="m0 18 60-14 10 50-58 20z" fill="#fbf2a0" />
        <path d="m48 20 72 4-3 54-66 2z" fill="#fcee92" />
        <path d="m34 62 70 8-4 40-68-6z" fill="#f9e98b" stroke="#d9c465" />
        <path d="m22 34 18-5M14 50l50-15M18 60l40-12" stroke="#555" strokeWidth="2.500" strokeDasharray="7 3" />
        <path d="m76 44 30 6" stroke="#e23b20" strokeWidth="7" strokeDasharray="5 2" />
        <path d="m54 86 30 3" stroke="#333a70" strokeWidth="5" strokeDasharray="6 2" />
      </g>
    ),
  },
  {
    dot: false,
    art: (
      <g>
        <circle cx="60" cy="62" r="58" fill="#00979d" />
        <path d="M60 61C50 44 22 40 22 61s28 17 38 0 38-21 38 0-28 17-38 0z" fill="none" stroke="#fff" strokeWidth="9" />
        <path d="M33 61h12M75 61h12M81 55v12" stroke="#fff" strokeWidth="3.500" />
      </g>
    ),
  },
  {
    dot: true,
    art: (
      <g>
        <path d="M60 13a48 48 0 1 1-20 92" fill="none" stroke="#3cb043" strokeWidth="16" />
        <circle cx="60" cy="61" r="45" fill="none" stroke="#3cb043" strokeWidth="6" strokeDasharray="5 6" />
        <circle cx="60" cy="61" r="53" fill="none" stroke="#55b83b" strokeWidth="5" strokeDasharray="4 8" />
      </g>
    ),
  },
  {
    dot: true,
    art: (
      <g>
        <path d="M18 10h94l-4 78-92-6z" fill="#eadfc6" stroke="#8c6a40" strokeWidth="3" strokeDasharray="5 3" />
        <path d="m2 32 98-12 12 74-98 14z" fill="#fafafa" />
        <path d="m8 37 88-11 4 28-88 10z" fill="#3d83c9" />
        <path d="m11 60 90-12 3 16-90 22z" fill="#dfe9f0" />
        <path d="m13 76 92-22 4 36-92 12z" fill="#c9ab83" />
        <path d="m11 55 91-9 1 12-90 16z" fill="#275b96" />
        <circle cx="94" cy="78" r="23" fill="#6c7478" stroke="#c6cbcd" strokeWidth="4" />
        <circle cx="94" cy="74" r="15" fill="#a8b7be" />
        <path d="M73 88v20q20 14 40 0V88q-20 14-40 0z" fill="#83898b" />
      </g>
    ),
  },
  {
    dot: true,
    art: (
      <g>
        <circle cx="60" cy="60" r="40" fill="#3d4043" />
        {[15, 55, 95, 135, 175, 215, 255, 295, 335].map((a) => {
          const [x, y] = polar(60, 60, 60, a);
          return <path key={a} d={`M60 60L${x} ${y}`} stroke="#f5f5f5" strokeWidth="5" />;
        })}
        <path d={"M" + [15, 55, 95, 135, 175, 215, 255, 295, 335].map((a) => polar(60, 60, 44, a).join(" ")).join("L") + "Z"} fill="none" stroke="#f5f5f5" strokeWidth="6" />
        <path d={"M" + [15, 55, 95, 135, 175, 215, 255, 295, 335].map((a) => polar(60, 60, 22, a).join(" ")).join("L") + "Z"} fill="none" stroke="#f5f5f5" strokeWidth="4" />
        <path d="M20 62q24-22 40 0t24-2 22-8" fill="none" stroke="#ee1620" strokeWidth="11" strokeLinecap="round" />
      </g>
    ),
  },
  {
    dot: true,
    art: (
      <g>
        <path d="M12 76V55Q17 6 60 5t48 50v21" fill="none" stroke="#1526e0" strokeWidth="7" />
        <path d="M26 84V52q4 14 8 14 3-26 7-26t5 15q4-28 8-28t6 26q3-27 7-26t7 25q5-24 9-12t9 26v38q-33 14-66 0z" fill="#f7b634" />
        <path d="m24 76 8-3 6 6 6-9 6 10 6-8 7 7 6-9 8 9 7-8 5 6 9-1" fill="none" stroke="#e8261c" strokeWidth="6" />
        <path d="M24 44Q-4 52-3 78t27 29zM96 44q28 8 27 34t-27 29z" fill="#1b2fe8" />
        <path d="M23 46v62M97 46v62" stroke="#0c1260" strokeWidth="4" />
      </g>
    ),
  },
  {
    dot: true,
    art: (
      <g>
        <rect x="8" y="8" width="105" height="105" rx="24" fill="#fff" />
        <rect x="24" y="43" width="33" height="16" rx="8" fill="#1fc5ee" />
        <path d="M57 24v16H49a8 8 0 1 1 8-8z" fill="#1fc5ee" />
        <rect x="63" y="24" width="16" height="35" rx="8" fill="#17b67c" />
        <path d="M83 59V51a8 8 0 1 1 8 8z" fill="#17b67c" />
        <rect x="62" y="63" width="35" height="16" rx="8" fill="#ecb03b" />
        <path d="M62 83h8a8 8 0 1 1-8 8z" fill="#ecb03b" />
        <rect x="43" y="63" width="16" height="36" rx="8" fill="#e01b5a" />
        <path d="M39 63v8a8 8 0 1 1-8-8z" fill="#e01b5a" />
      </g>
    ),
  },
];

function Dock() {
  return (
    <div className="absolute left-[267px] top-[746px] flex h-[60px] w-[746px] rounded-t-[5px] bg-gradient-to-r from-[#b27768] via-[#bb7744] to-[#f0853f] pl-[2px]">
      {DOCK.map(({ dot, art }, i) => (
        <div key={i} className="flex w-[45px] shrink-0 flex-col items-center pt-[5px]">
          <svg width="42" height="40" viewBox="-3 0 126 120">{art}</svg>
          {dot && <div className="mt-[3px] h-1 w-1 rounded-full bg-[#3d0807]" />}
        </div>
      ))}
      <div className="ml-[11px] mt-[7px] h-[40px] w-px bg-[#a75c25]" />
      <svg width="34" height="42" viewBox="0 0 102 126" className="ml-[14px] mt-[4px]">
        <defs><linearGradient id="tr" x1="0" y1="0" x2="1" y2="0"><stop offset="0" stopColor="#b5b5b3" /><stop offset=".3" stopColor="#dededc" /><stop offset=".75" stopColor="#cfcfcd" /><stop offset="1" stopColor="#acacaa" /></linearGradient></defs>
        <path d="M6 22h90l-11 92q-34 14-66 0z" fill="url(#tr)" />
        <path d="m26 44 16 28-10 30M76 40 58 66l12 40" stroke="#ececea" strokeWidth="4" fill="none" opacity=".7" />
        <ellipse cx="51" cy="20" rx="45" ry="14" fill="#ececea" />
        <ellipse cx="51" cy="19" rx="38" ry="10" fill="#55514c" />
        <path d="m16 18 18-14 14 14 12-15 14 13 10-4 6 9-20 6-16-4-18 6z" fill="#f2f2f0" />
        <path d="m30 14 10-6 4 12zM60 8l6 12 8-6z" fill="#4a8f8a" />
        <path d="m46 16 6-4 6 10-10 2z" fill="#333" />
      </svg>
    </div>
  );
}

function Wallpaper() {
  return (
    <svg className="absolute left-0 top-[740px]" width="1280" height="60">
      <defs>
        <linearGradient id="wl" x1="0" y1="0" x2="1" y2="0"><stop offset="0" stopColor="#5c362c" /><stop offset=".4" stopColor="#9c6150" /><stop offset="1" stopColor="#96583d" /></linearGradient>
        <linearGradient id="wr" x1="0" y1="0" x2="0" y2="1"><stop offset="0" stopColor="#33230c" /><stop offset=".5" stopColor="#8a5218" /><stop offset="1" stopColor="#e38a30" /></linearGradient>
        <linearGradient id="wd" x1="0" y1="0" x2="0" y2="1"><stop offset="0" stopColor="#0e0503" stopOpacity=".9" /><stop offset=".6" stopColor="#0e0503" stopOpacity=".12" /></linearGradient>
        <filter id="streaks" x="0" y="0" width="100%" height="100%">
          <feTurbulence type="fractalNoise" baseFrequency="0.03 0.4" numOctaves="4" seed="7" />
          <feColorMatrix values="0 0 0 0 0.05  0 0 0 0 0.02  0 0 0 0 0.01  3.2 0 0 0 -1.4" />
        </filter>
      </defs>
      <rect width="640" height="60" fill="url(#wl)" />
      <rect width="640" height="60" fill="url(#wd)" />
      <rect x="640" width="640" height="60" fill="url(#wr)" />
      <rect width="1280" height="60" filter="url(#streaks)" />
    </svg>
  );
}

export default function App() {
  return (
    <div className="relative h-[800px] w-[1280px] overflow-hidden bg-[#2b1a14] font-['Inter',sans-serif] leading-none">
      <Wallpaper />
      <Browser />
      <Finder />
      <Audacity />
      <Dialog />
      <MenuBar />
      <Dock />
    </div>
  );
}
